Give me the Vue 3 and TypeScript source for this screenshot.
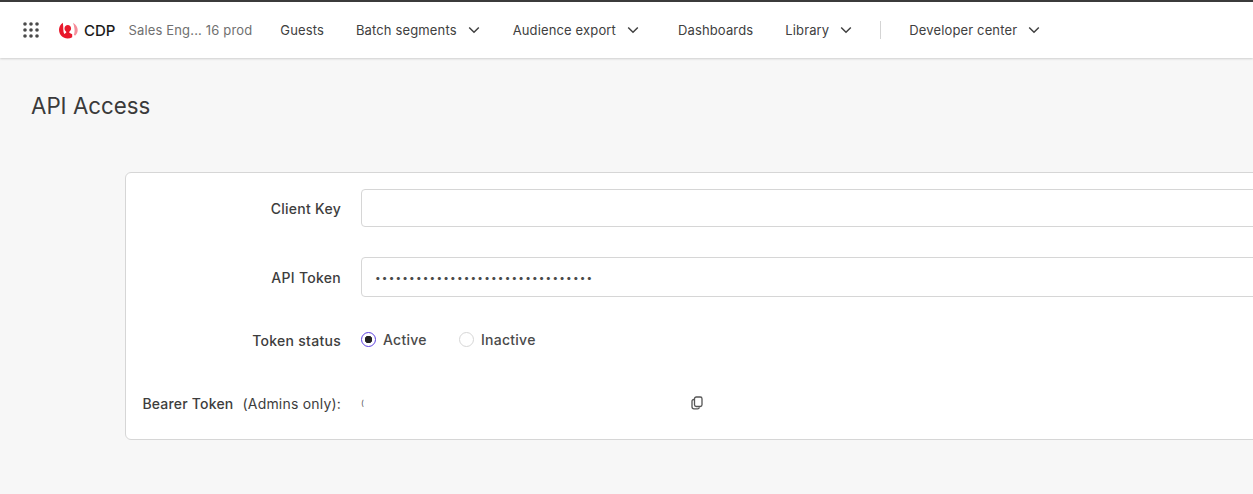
<script setup lang="ts">
interface NavItem { label: string; chevron: boolean; cls: string }
const items: NavItem[] = [
  { label: 'Guests', chevron: false, cls: 'guests' },
  { label: 'Batch segments', chevron: true, cls: 'batch' },
  { label: 'Audience export', chevron: true, cls: 'audience' },
  { label: 'Dashboards', chevron: false, cls: 'dash' },
  { label: 'Library', chevron: true, cls: 'library' },
]
const dots = [0, 1, 2].flatMap((y) => [0, 1, 2].map((x) => ({ cx: 2 + x * 6, cy: 2 + y * 6 })))
const token = '•'.repeat(32)
</script>

<template>
  <div class="page">
    <header class="topbar">
      <svg class="apps" width="16" height="16" viewBox="0 0 16 16" aria-hidden="true">
        <circle v-for="(d, i) in dots" :key="i" :cx="d.cx" :cy="d.cy" r="1.8" fill="#4a4a4a" />
      </svg>
      <svg class="logo" width="19" height="17" viewBox="0 0 19 17" aria-hidden="true">
        <path d="M3.800 .8C1.200 2.800 0 5.300 0 7.800 0 12.800 4 16.500 8.500 16.500c1.700 0 3.200-.4 4.700-1.200v-3l-2.900-1.500V9.700c1.100-.6 1.800-1.800 1.800-3.100 0-2-1.500-3.500-3.300-3.500S5.500 4.600 5.500 6.600c0 1.300.7 2.500 1.700 3.100v1.100l-2 1.200C4.600 10.600 4.300 9 4.300 7.300 4.300 5.200 4.200 3 3.800 .8Z" fill="#e8192c" />
        <path d="M14 .8C17 2.800 18.700 5.300 18.700 8c0 2.400-1 4.300-2.700 5.700l-1.200-1.100c.8-1.300 .9-3.500 .7-5.600-.2-2.300-.8-4.400-1.500-6.200Z" fill="#f58e9a" />
      </svg>
      <span class="brand">CDP</span>
      <span class="account">Sales Eng... 16 prod</span>
      <nav class="nav">
        <a v-for="item in items" :key="item.label" class="nav-item" :class="item.cls">
          {{ item.label }}
          <svg v-if="item.chevron" class="chev" width="12" height="8" viewBox="0 0 12 8" aria-hidden="true">
            <path d="M1.200 1.500 6 6.200l4.800-4.700" fill="none" stroke="#404040" stroke-width="1.500" />
          </svg>
        </a>
        <span class="sep"></span>
        <a class="nav-item dev">
          Developer center
          <svg class="chev" width="12" height="8" viewBox="0 0 12 8" aria-hidden="true">
            <path d="M1.200 1.500 6 6.200l4.800-4.700" fill="none" stroke="#404040" stroke-width="1.500" />
          </svg>
        </a>
      </nav>
    </header>

    <main class="content">
      <h1 class="title">API Access</h1>
      <section class="card">
        <div class="row row-key">
          <label class="label">Client Key</label>
          <div class="input"></div>
        </div>
        <div class="row row-token">
          <label class="label">API Token</label>
          <div class="input token-input"><span class="secret">{{ token }}</span></div>
        </div>
        <div class="row row-status">
          <label class="label">Token status</label>
          <div class="radios">
            <span class="radio-wrap"><span class="radio on"></span>Active</span>
            <span class="radio-wrap"><span class="radio"></span>Inactive</span>
          </div>
        </div>
        <div class="row row-bearer">
          <label class="label bearer-label"><span>Bearer Token</span><span class="hint">(Admins only):</span></label>
          <div class="bearer">
            <span class="clip">(</span>
            <svg class="copy" width="14" height="14" viewBox="0 0 14 14" aria-hidden="true">
              <rect x="4.500" y="1" width="7.500" height="9.500" rx="1.800" fill="none" stroke="#555" stroke-width="1.300" />
              <path d="M4 3.500c-1.300 0-2 .7-2 1.800v5.400c0 1.300.8 2.100 2 2.100h3.500c1 0 1.700-.6 1.900-1.500" fill="none" stroke="#555" stroke-width="1.300" />
            </svg>
          </div>
        </div>
      </section>
    </main>
  </div>
</template>

<style>
html, body { margin: 0; background: #f7f7f7; overflow: hidden; }
</style>

<style scoped>
.page {
  width: 1253px;
  height: 494px;
  overflow: hidden;
  background: #f7f7f7;
  font-family: Inter, "Liberation Sans", sans-serif;
  color: #3d3d3d;
  font-size: 13px;
}
.topbar {
  box-sizing: border-box;
  height: 58px;
  display: flex;
  align-items: center;
  padding-left: 23px;
  background: #fff;
  border-top: 2px solid #3b3b3b;
  box-shadow: 0 1px 2px rgba(0, 0, 0, 0.16);
}
.apps { flex: none; }
.logo { flex: none; margin-left: 20px; }
.brand { margin-left: 6px; font-size: 15px; font-weight: 500; color: #1a1a1a; }
.account { margin-left: 13px; color: #707070; white-space: nowrap; letter-spacing: 0.16px; }
.nav { display: flex; align-items: center; margin-left: 28px; letter-spacing: 0.14px; }
.nav-item { display: flex; align-items: center; gap: 11px; white-space: nowrap; color: #404040; }
.batch { margin-left: 32px; }
.audience { margin-left: 33px; }
.dash { margin-left: 39px; }
.library { margin-left: 32px; }
.sep { width: 1px; height: 18px; background: #d4d4d4; margin-left: 28px; }
.dev { margin-left: 28px; }
.chev { flex: none; }

.content { padding: 34px 0 0 31px; }
.title {
  margin: 0;
  font-size: 22.300px;
  line-height: 28px;
  font-weight: 400;
  color: #3a3a3a;
}
.card {
  box-sizing: border-box;
  width: 1160px;
  height: 268px;
  margin: 52px 0 0 94px;
  padding-top: 16px;
  background: #fff;
  border: 1px solid #d6d6d6;
  border-radius: 6px;
}
.row {
  display: grid;
  grid-template-columns: 215px 1fr;
  column-gap: 20px;
  align-items: center;
}
.label { text-align: right; font-size: 14px; font-weight: 500; letter-spacing: 0.28px; color: #3d3d3d; }
.input {
  box-sizing: border-box;
  height: 38px;
  background: #fff;
  border: 1px solid #d6d6d6;
  border-radius: 4px;
  margin-right: -8px;
}
.row-token { margin-top: 30px; }
.row-token .input { height: 40px; display: flex; align-items: center; padding-left: 13px; }
.secret { font-size: 10px; letter-spacing: 1.200px; color: #4a4a4a; }
.row-status { margin-top: 33px; height: 20px; }
.radios { display: flex; gap: 32px; margin-top: -2px; font-size: 14px; font-weight: 500; letter-spacing: 0.28px; color: #4a4a4a; }
.radio-wrap { display: flex; align-items: center; gap: 7px; }
.radio {
  box-sizing: border-box;
  width: 15px;
  height: 15px;
  border: 1px solid #d6d6d6;
  border-radius: 50%;
  background: #fff;
}
.radio.on { border-color: #5b3fe0; background: radial-gradient(circle, #222 0 3.500px, #fff 4px); }
.row-bearer { margin-top: 43px; height: 20px; }
.bearer-label { display: flex; justify-content: flex-end; gap: 9px; white-space: nowrap; letter-spacing: 0.2px; }
.hint { font-weight: 400; letter-spacing: 0.2px; }
.bearer { display: flex; align-items: center; }
.clip { font-size: 8px; color: #555; width: 329px; }
.copy { flex: none; margin-top: 0; }
</style>
